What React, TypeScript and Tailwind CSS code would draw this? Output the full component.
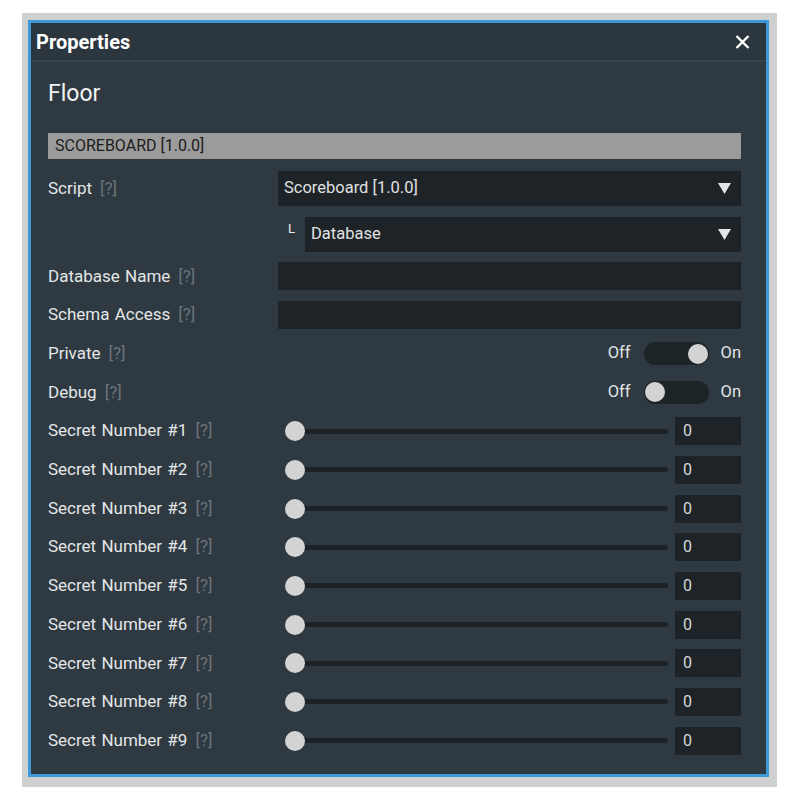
import React from "react";

const font = { fontFamily: "Roboto, 'Noto Sans', sans-serif" };

function Help() {
  return <span className="ml-[8px] text-[#6c747a]">[?]</span>;
}

function Label({ text }: { text: string }) {
  return (
    <div className="flex w-[230px] shrink-0 items-center text-[17px] text-[#e4e6e7] [word-spacing:1px]">
      {text}
      <Help />
    </div>
  );
}

function Caret() {
  return (
    <svg width="13" height="11" viewBox="0 0 13 11" className="shrink-0">
      <polygon points="0,0 13,0 6.5,11" fill="#e2e4e5" />
    </svg>
  );
}

function Dropdown({ value }: { value: string }) {
  return (
    <div className="flex h-[35px] flex-1 items-center justify-between bg-[#1d2327] pl-[6px] pr-[10px] text-[16.5px] text-[#e0e2e3]">
      <span>{value}</span>
      <Caret />
    </div>
  );
}

function Toggle({ on }: { on: boolean }) {
  return (
    <div className="flex flex-1 items-center justify-end text-[16.5px] text-[#e2e4e5]">
      <span>Off</span>
      <div
        className={
          on
            ? "ml-[13px] flex h-[23px] w-[65px] items-center justify-end rounded-full bg-[#1d2428] px-[1px]"
            : "ml-[13px] flex h-[23px] w-[65px] items-center justify-start rounded-full bg-[#1d2428] px-[1px]"
        }
      >
        <div className="h-[20px] w-[20px] rounded-full bg-[#d3d3d3]" />
      </div>
      <span className="ml-[12px]">On</span>
    </div>
  );
}

function Slider() {
  return (
    <div className="flex flex-1 items-center">
      <div className="relative flex h-[28px] flex-1 items-center">
        <div className="ml-[12px] h-[5px] flex-1 rounded-full bg-[#1c2226]" />
        <div className="absolute left-[7px] top-[4px] h-[20px] w-[20px] rounded-full bg-[#d3d3d3]" />
      </div>
      <div className="ml-[7px] flex h-[28px] w-[66px] items-end bg-[#1d2327] pb-[2px] pl-[8px] text-[16px] text-[#d6d8d9]">
        0
      </div>
    </div>
  );
}

export default function App() {
  const secrets = [1, 2, 3, 4, 5, 6, 7, 8, 9];
  return (
    <div className="min-h-[800px] w-[800px] bg-white pl-[22px] pt-[13px]" style={font}>
      <div className="w-[755px] bg-[#cfd0d0] pb-[10px] pl-[6px] pr-[8px] pt-[7px]">
        <div className="border-[3px] border-[#3c9ad8] bg-[#2e3941]">
          <div className="flex h-[37px] items-center justify-between bg-[#2b363e] pl-[5px] pr-[16px]">
            <span className="text-[20px] font-bold text-white">Properties</span>
            <svg width="15" height="14" viewBox="0 0 15 14">
              <path d="M1.5 1 L13.5 13 M13.5 1 L1.5 13" stroke="#ffffff" strokeWidth="2.4" />
            </svg>
          </div>
          <div className="h-[2px] bg-[#39454d]" />
          <div className="pb-[19px] pl-[17px] pr-[25px] pt-[16px]">
            <div className="h-[32px] text-[23px] leading-[32px] text-[#f2f3f4]">Floor</div>
            <div className="mt-[23px] flex h-[26px] items-center bg-[#9b9b9b] pl-[7px] text-[16px] text-[#1c1c1c]">
              SCOREBOARD [1.0.0]
            </div>
            <div className="mt-[12px] flex flex-col gap-[10.7px]">
              <div className="flex items-center">
                <Label text="Script" />
                <Dropdown value="Scoreboard [1.0.0]" />
              </div>
              <div className="flex items-center">
                <div className="w-[230px] shrink-0" />
                <div className="flex w-[27px] shrink-0 self-start pl-[10px] pt-[5px] text-[13px] leading-[14px] text-[#eeeeee]">
                  L
                </div>
                <Dropdown value="Database" />
              </div>
              <div className="flex h-[28px] items-center">
                <Label text="Database Name" />
                <div className="h-[28px] flex-1 bg-[#1d2327]" />
              </div>
              <div className="flex h-[28px] items-center">
                <Label text="Schema Access" />
                <div className="h-[28px] flex-1 bg-[#1d2327]" />
              </div>
              <div className="flex h-[28px] items-center">
                <Label text="Private" />
                <Toggle on={true} />
              </div>
              <div className="flex h-[28px] items-center">
                <Label text="Debug" />
                <Toggle on={false} />
              </div>
              {secrets.map((n) => (
                <div key={n} className="flex h-[28px] items-center">
                  <Label text={`Secret Number #${n}`} />
                  <Slider />
                </div>
              ))}
            </div>
          </div>
        </div>
      </div>
    </div>
  );
}
